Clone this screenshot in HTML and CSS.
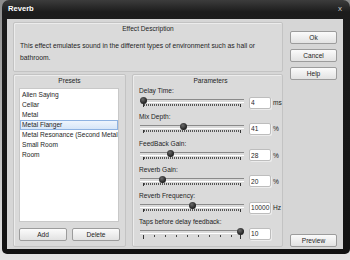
FILE: index.html
```html
<!DOCTYPE html>
<html lang="en">
<head>
  <meta charset="UTF-8">
  <title>Reverb</title>
  <link rel="stylesheet" href="styles.css">
</head>
<body>
  <div class="window">
    <div class="titlebar">
      <span class="title">Reverb</span>
      <span class="close">x</span>
    </div>
    <div class="client">
      <div class="main">
        <div class="group desc">
          <div class="group-title">Effect Description</div>
          <p class="desc-text">This effect emulates sound in the different types of environment such as hall or bathroom.</p>
        </div>
        <div class="lower">
          <div class="group presets">
            <div class="group-title">Presets</div>
            <ul class="list">
              <li>Alien Saying</li>
              <li>Cellar</li>
              <li>Metal</li>
              <li class="selected">Metal Flanger</li>
              <li>Metal Resonance (Second Metal</li>
              <li>Small Room</li>
              <li>Room</li>
            </ul>
            <div class="list-buttons">
              <button>Add</button>
              <button>Delete</button>
            </div>
          </div>
          <div class="group params">
            <div class="group-title">Parameters</div>
            <div class="param">
              <div class="param-label">Delay Time:</div>
              <div class="param-row">
                <div class="slider"><span class="thumb" style="--pos: 0"></span></div>
                <input class="value" type="text" value="4">
                <span class="unit">ms</span>
              </div>
            </div>
            <div class="param">
              <div class="param-label">Mix Depth:</div>
              <div class="param-row">
                <div class="slider"><span class="thumb" style="--pos: 0.41"></span></div>
                <input class="value" type="text" value="41">
                <span class="unit">%</span>
              </div>
            </div>
            <div class="param">
              <div class="param-label">FeedBack Gain:</div>
              <div class="param-row">
                <div class="slider"><span class="thumb" style="--pos: 0.28"></span></div>
                <input class="value" type="text" value="28">
                <span class="unit">%</span>
              </div>
            </div>
            <div class="param">
              <div class="param-label">Reverb Gain:</div>
              <div class="param-row">
                <div class="slider"><span class="thumb" style="--pos: 0.2"></span></div>
                <input class="value" type="text" value="20">
                <span class="unit">%</span>
              </div>
            </div>
            <div class="param">
              <div class="param-label">Reverb Frequency:</div>
              <div class="param-row">
                <div class="slider"><span class="thumb" style="--pos: 0.5"></span></div>
                <input class="value" type="text" value="10000">
                <span class="unit">Hz</span>
              </div>
            </div>
            <div class="param">
              <div class="param-label">Taps before delay feedback:</div>
              <div class="param-row">
                <div class="slider sparse"><span class="thumb" style="--pos: 1"></span></div>
                <input class="value" type="text" value="10">
              </div>
            </div>
          </div>
        </div>
      </div>
      <div class="side">
        <button>Ok</button>
        <button>Cancel</button>
        <button>Help</button>
        <button class="preview">Preview</button>
      </div>
    </div>
  </div>
</body>
</html>
```

FILE: styles.css
```css
* {
  box-sizing: border-box;
}

html, body {
  margin: 0;
  padding: 0;
}

body {
  width: 350px;
  height: 260px;
  overflow: hidden;
  background: linear-gradient(to bottom, #8c8c8c, #e4e4e4);
  font-family: 'Liberation Sans', Arial, sans-serif;
  font-size: 6.6px;
  color: #1e1e1e;
}

.window {
  width: 348px;
  height: 254px;
  margin-left: 2px;
  padding: 0 7px 5px 5px;
  display: flex;
  flex-direction: column;
  background: linear-gradient(to bottom, #3c3c3c, #1c1c1c 12px, #121212);
  border-radius: 7px 7px 5px 5px;
}

.titlebar {
  height: 19px;
  display: flex;
  align-items: center;
  justify-content: space-between;
  padding: 0 0 3px 0;
}

.title {
  color: #ffffff;
  font-weight: 700;
  font-size: 7.6px;
  margin-left: 1px;
}

.close {
  color: #c8c8c8;
  font-size: 8px;
  margin-right: 1px;
}

.client {
  flex: 1;
  display: flex;
  padding: 3px 6px 0 6px;
  background: #d6d6d6;
}

.main {
  width: 270px;
  display: flex;
  flex-direction: column;
  gap: 2px;
}

.group {
  background: #dadada;
  border: 1px solid #c3c3c3;
  border-radius: 2px;
  box-shadow: inset 1px 1px 0 #ececec;
}

.group-title {
  text-align: center;
  height: 11px;
  line-height: 11px;
}

.desc {
  height: 50px;
}

.desc-text {
  margin: 6px 0 0 6px;
  font-size: 6.75px;
  line-height: 12px;
  max-width: 250px;
}

.lower {
  flex: 1;
  display: flex;
  gap: 6px;
  margin-bottom: 2px;
}

.presets {
  width: 113px;
  padding: 0 5px;
}

.list {
  list-style: none;
  margin: 2px 0 0 0;
  padding: 1px 0 0 0;
  width: 100px;
  height: 134px;
  background: #ffffff;
  border: 1px solid #c8c8c8;
  overflow: hidden;
}

.list li {
  height: 10px;
  line-height: 10px;
  padding-left: 2px;
  white-space: nowrap;
}

.list li.selected {
  background: linear-gradient(to bottom, #eef5fd, #d6e6f8);
  border: 1px solid #8eb3e2;
  line-height: 8px;
  padding-left: 1px;
}

.list-buttons {
  display: flex;
  gap: 5px;
  margin-top: 6px;
}

button {
  font-family: 'Liberation Sans', Arial, sans-serif;
  font-size: 6.6px;
  color: #1e1e1e;
  height: 13px;
  padding: 0;
  background: linear-gradient(to bottom, #fbfbfb, #e2e2e2);
  border: 1px solid #9c9c9c;
  border-radius: 2px;
}

.list-buttons button {
  width: 49px;
}

.params {
  flex: 1;
  padding: 0 0 0 6px;
}

.param {
  height: 26.3px;
}

.param-label {
  height: 10px;
  line-height: 10px;
}

.param-row {
  display: flex;
  align-items: center;
  height: 13px;
}

.slider {
  position: relative;
  width: 104px;
  height: 13px;
  margin-left: 1px;
  margin-right: 5px;
}

.slider::before {
  content: "";
  position: absolute;
  left: 0;
  right: 0;
  top: 3px;
  height: 2px;
  border-top: 1px solid #8a8a8a;
  border-bottom: 1px solid #ffffff;
}

.slider::after {
  content: "";
  position: absolute;
  left: 3px;
  right: 3px;
  top: 8px;
  height: 3px;
  border-left: 1px solid #333333;
  border-right: 1px solid #333333;
  background: repeating-linear-gradient(to right, #555555 0 1px, transparent 1px 2px) 0 0 / 100% 2px no-repeat;
}

.slider.sparse::after {
  height: 4px;
  background: repeating-linear-gradient(to right, transparent 0 10px, #444444 10px 11px) 0 0 / 100% 2px no-repeat;
}

.thumb {
  position: absolute;
  top: 1px;
  left: calc((100% - 7px) * var(--pos));
  width: 7px;
  height: 7px;
  border-radius: 50%;
  background: radial-gradient(circle at 40% 35%, #6a6a6a, #1e1e1e 70%);
  z-index: 1;
}

.value {
  width: 22px;
  height: 12px;
  padding: 0 0 0 1px;
  border: 1px solid #bdbdbd;
  border-radius: 2px;
  background: #ffffff;
  box-shadow: 1px 1px 0 #ececec;
  font-family: 'Liberation Sans', Arial, sans-serif;
  font-size: 6.6px;
  color: #1e1e1e;
  outline: none;
}

.unit {
  margin-left: 2px;
}

.side {
  width: 47px;
  margin-left: 7px;
  display: flex;
  flex-direction: column;
  gap: 5px;
  padding: 9px 0 2px 0;
}

.side button {
  width: 47px;
}

.side .preview {
  margin-top: auto;
}
```
